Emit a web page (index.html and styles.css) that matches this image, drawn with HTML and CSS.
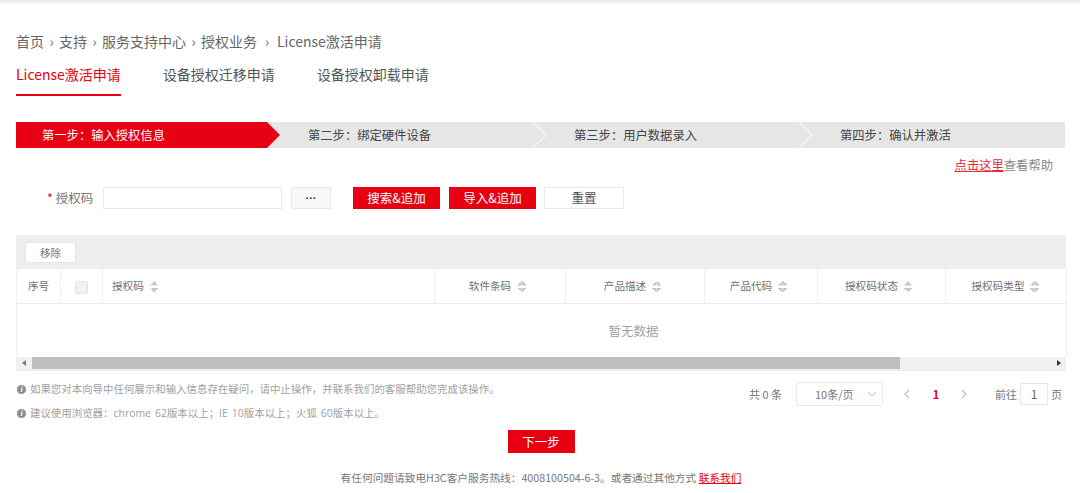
FILE: index.html
```html
<!DOCTYPE html>
<html lang="zh-CN">
<head>
<meta charset="utf-8">
<title>License激活申请</title>
<link rel="stylesheet" href="styles.css">
</head>
<body>
<div class="topshadow"></div>
<main class="page">
  <nav class="crumbs">
    <span>首页</span><i class="sep">›</i><span>支持</span><i class="sep">›</i><span>服务支持中心</span><i class="sep">›</i><span>授权业务</span><i class="sep last">›</i><span>License激活申请</span>
  </nav>
  <div class="tabs">
    <a class="tab active">License激活申请</a>
    <a class="tab">设备授权迁移申请</a>
    <a class="tab">设备授权卸载申请</a>
  </div>
  <div class="steps">
    <div class="step current">第一步：输入授权信息</div>
    <div class="step">第二步：绑定硬件设备<svg class="chev" viewBox="0 0 14 26" width="14" height="26"><path d="M0 0L13 13L0 26" fill="none" stroke="#fff" stroke-width="1"/></svg></div>
    <div class="step">第三步：用户数据录入<svg class="chev" viewBox="0 0 14 26" width="14" height="26"><path d="M0 0L13 13L0 26" fill="none" stroke="#fff" stroke-width="1"/></svg></div>
    <div class="step">第四步：确认并激活</div>
  </div>
  <div class="help"><a class="help-link">点击这里</a>查看帮助</div>
  <form class="form">
    <label class="label"><span class="star">*</span> 授权码</label>
    <input class="code" type="text">
    <button type="button" class="more">···</button>
    <button type="button" class="btn red">搜索&amp;追加</button>
    <button type="button" class="btn red">导入&amp;追加</button>
    <button type="button" class="btn plain">重置</button>
  </form>
  <section class="panel">
    <div class="toolbar"><button type="button" class="remove">移除</button></div>
    <table class="grid">
      <colgroup>
        <col class="c1"><col class="c2"><col class="c3"><col class="c4"><col class="c5"><col class="c6"><col class="c7"><col class="c8">
      </colgroup>
      <thead>
        <tr>
          <th>序号</th>
          <th><span class="check"></span></th>
          <th class="left">授权码<span class="sort"></span></th>
          <th>软件条码<span class="sort"></span></th>
          <th>产品描述<span class="sort"></span></th>
          <th>产品代码<span class="sort"></span></th>
          <th>授权码状态<span class="sort"></span></th>
          <th class="lastcol">授权码类型<span class="sort"></span></th>
        </tr>
      </thead>
      <tbody>
        <tr><td colspan="8" class="empty">暂无数据</td></tr>
      </tbody>
    </table>
    <div class="scrollbar">
      <span class="arrow"><svg viewBox="0 0 4 6" width="4" height="6"><path d="M4 0V6L0 3Z" fill="#7a7a7a"/></svg></span>
      <span class="thumb"></span>
      <span class="arrow end"><svg viewBox="0 0 4 6" width="4" height="6"><path d="M0 0V6L4 3Z" fill="#333"/></svg></span>
    </div>
  </section>
  <div class="below">
    <div class="notes">
      <p class="note"><span class="info">i</span>如果您对本向导中任何展示和输入信息存在疑问，请中止操作，并联系我们的客服帮助您完成该操作。</p>
      <p class="note wide"><span class="info">i</span>建议使用浏览器：chrome 62版本以上；IE 10版本以上；火狐 60版本以上。</p>
    </div>
    <div class="pager">
      <span class="total">共 0 条</span>
      <div class="size">10条/页<svg class="size-arrow" viewBox="0 0 10 6" width="10" height="6"><path d="M1 1L5 5L9 1" fill="none" stroke="#c8ccd4" stroke-width="1"/></svg></div>
      <svg class="nav prev" viewBox="0 0 6 10" width="6" height="10"><path d="M5 1L1 5L5 9" fill="none" stroke="#b4b8c0" stroke-width="1.1"/></svg>
      <b class="cur">1</b>
      <svg class="nav next" viewBox="0 0 6 10" width="6" height="10"><path d="M1 1L5 5L1 9" fill="none" stroke="#b4b8c0" stroke-width="1.1"/></svg>
      <span class="goto">前往</span>
      <span class="jump">1</span>
      <span class="pg">页</span>
    </div>
  </div>
  <div class="next-row"><button type="button" class="btn red next-btn">下一步</button></div>
  <footer class="foot">有任何问题请致电H3C客户服务热线：4008100504-6-3。或者通过其他方式 <a class="foot-link">联系我们</a></footer>
</main>
</body>
</html>
```
FILE: styles.css
```css
* { box-sizing: border-box; }
html, body { margin: 0; padding: 0; }
body {
  font-family: "Noto Sans CJK SC", "Open Sans", sans-serif;
  background: #fff;
  color: #666;
  overflow: hidden;
}
.topshadow {
  height: 5px;
  background: linear-gradient(#e9e9e9, #fff);
}
.page {
  width: 1066px;
  padding-left: 16px;
}
.crumbs {
  margin-top: 26px;
  height: 20px;
  line-height: 20px;
  font-size: 14px;
  color: #666;
  display: flex;
}
.sep {
  font-style: normal;
  width: 15px;
  text-align: center;
  font-size: 14px;
}
.sep.last { width: 20px; }
.tabs {
  display: flex;
  gap: 42px;
}
.tab {
  font-size: 14px;
  line-height: 20px;
  padding: 13px 0 10px;
  color: #555;
  border-bottom: 2px solid transparent;
}
.tab.active {
  color: #e60012;
  border-bottom: 2px solid #e60012;
}
.steps {
  margin-top: 26px;
  display: flex;
  width: 1049px;
  height: 26px;
  background: #e6e6e4;
}
.step {
  position: relative;
  width: 266px;
  flex: none;
  padding-left: 26px;
  font-size: 12.3px;
  line-height: 26px;
  color: #444;
}
.step.current {
  color: #fff;
  background: #e60012;
  clip-path: polygon(0 0, 251px 0, 264px 50%, 251px 100%, 0 100%);
}
.chev {
  position: absolute;
  left: 251px;
  top: 0;
}
.help {
  margin-top: 7px;
  width: 1037px;
  height: 20px;
  line-height: 20px;
  font-size: 12.3px;
  text-align: right;
  color: #888;
  white-space: nowrap;
}
.help-link {
  color: #e8293a;
  text-decoration: underline;
}
.form {
  margin-top: 12px;
  height: 22px;
  display: flex;
  align-items: stretch;
}
.label {
  width: 87px;
  padding-left: 31px;
  font-size: 12.5px;
  line-height: 22px;
  color: #777;
  white-space: nowrap;
}
.star { color: #e60012; }
.code {
  width: 179px;
  border: 1px solid #e6e8ee;
  background: #fff;
  margin: 0;
  padding: 0;
}
.more {
  width: 40px;
  margin-left: 9px;
  border: 1px solid #e6e8ee;
  background: #f8f8f8;
  color: #333;
  font-family: "Liberation Sans", sans-serif;
  font-size: 11px;
  font-weight: bold;
  line-height: 18px;
  padding: 0;
}
.btn {
  font-family: inherit;
  font-size: 12.5px;
  line-height: 20px;
  padding: 0;
}
.btn.red {
  background: #e60012;
  color: #fff;
  border: 1px solid #e60012;
  width: 87px;
  margin-left: 9px;
}
.form .more + .btn.red { margin-left: 22px; }
.btn.plain {
  background: #fff;
  color: #555;
  border: 1px solid #e9e9e9;
  width: 80px;
  margin-left: 8px;
}
.panel { margin-top: 26px; width: 1050px; }
.toolbar {
  height: 34px;
  background: #eee;
  padding: 7px 0 6px 9px;
}
.remove {
  display: block;
  width: 51px;
  height: 21px;
  padding: 0;
  border: 1px solid #e6e6e6;
  background: #fff;
  color: #777;
  font-family: inherit;
  font-size: 10.5px;
  line-height: 19px;
}
.grid {
  width: 1050px;
  table-layout: fixed;
  border-collapse: collapse;
  border-left: 1px solid #eef0f5;
  border-right: 1px solid #eef0f5;
}
.c1 { width: 44px; }
.c2 { width: 42px; }
.c3 { width: 332px; }
.c4 { width: 131px; }
.c5 { width: 139px; }
.c6 { width: 113px; }
.c7 { width: 128px; }
.c8 { width: 121px; }
.grid th {
  height: 34px;
  padding: 0;
  font-size: 10.6px;
  font-weight: normal;
  color: #707070;
  text-align: center;
  border-right: 1px solid #eef0f5;
  border-bottom: 1px solid #e9ecf2;
  white-space: nowrap;
}
.grid th.left { text-align: left; padding-left: 9px; }
.grid th.lastcol { padding-left: 4px; }
.grid th:last-child { border-right: 0; }
.check {
  display: inline-block;
  width: 13px;
  height: 13px;
  vertical-align: middle;
  background: #edf1fb;
  border: 1px solid #dfe4ef;
  border-radius: 2px;
}
.sort {
  display: inline-block;
  width: 9px;
  height: 11px;
  margin: 0 5px 0 6px;
  vertical-align: -2px;
  background:
    linear-gradient(to top left, #c4c8d0 50%, transparent 50%) left top / 4.5px 4.5px no-repeat,
    linear-gradient(to top right, #c4c8d0 50%, transparent 50%) right top / 4.5px 4.5px no-repeat,
    linear-gradient(to bottom left, #c4c8d0 50%, transparent 50%) left bottom / 4.5px 4.5px no-repeat,
    linear-gradient(to bottom right, #c4c8d0 50%, transparent 50%) right bottom / 4.5px 4.5px no-repeat;
}
.empty {
  height: 54px;
  padding: 0 0 0 184px;
  text-align: center;
  font-size: 12.5px;
  color: #a3a3a3;
}
.scrollbar {
  height: 14px;
  display: flex;
  align-items: center;
  background: #f1f1f1;
  border-bottom: 1px solid #e8ebf3;
  padding-bottom: 1px;
}
.arrow {
  width: 16px;
  flex: none;
  display: flex;
  justify-content: center;
}
.arrow.end { margin-left: auto; padding-left: 1px; }
.thumb {
  width: 868px;
  height: 12px;
  background: #bfbfbf;
}
.below {
  width: 1050px;
  display: flex;
  justify-content: space-between;
  height: 59px;
}
.notes { padding-top: 6px; }
.note {
  margin: 0;
  height: 24px;
  line-height: 24px;
  font-family: "Open Sans", "Noto Sans CJK SC", sans-serif;
  font-size: 10.45px;
  color: #a0a0a0;
  display: flex;
  align-items: center;
  white-space: pre;
}
.note.wide { word-spacing: 1.3px; }
.info {
  width: 9px;
  height: 9px;
  margin: 0 4px 0 1px;
  border-radius: 50%;
  background: #8c8c8c;
  color: #fff;
  font: italic bold 8px/9px "Liberation Serif", serif;
  text-align: center;
}
.pager {
  padding-top: 11px;
  margin-right: 1px;
  display: flex;
  align-items: flex-start;
  font-size: 11px;
  color: #777;
  line-height: 24px;
  white-space: nowrap;
}
.total { width: 47px; }
.size {
  position: relative;
  width: 87px;
  height: 24px;
  border: 1px solid #e8eaf0;
  border-radius: 2px;
  padding-left: 18px;
  line-height: 22px;
  color: #777;
}
.size-arrow {
  position: absolute;
  right: 5px;
  top: 8px;
}
.nav { flex: none; margin-top: 7px; }
.prev { margin-left: 21px; }
.cur {
  width: 10px;
  margin-left: 21px;
  color: #e60012;
  font-size: 11px;
  text-align: center;
}
.next { margin-left: 20px; }
.goto { margin-left: 28px; width: 25px; }
.jump {
  width: 28px;
  height: 22px;
  margin-top: 1px;
  border: 1px solid #e4e7ed;
  text-align: center;
  font-size: 12px;
  line-height: 20px;
  color: #666;
}
.pg { margin-left: 3px; width: 14px; }
.next-row {
  width: 1050px;
  display: flex;
  justify-content: center;
}
.next-row .next-btn {
  margin: 0;
  width: 67px;
  height: 23px;
}
.foot {
  margin-top: 15px;
  width: 1050px;
  height: 20px;
  line-height: 20px;
  text-align: center;
  font-size: 10.7px;
  color: #777;
  white-space: nowrap;
}
.foot-link {
  color: #e60012;
  text-decoration: underline;
}
```
